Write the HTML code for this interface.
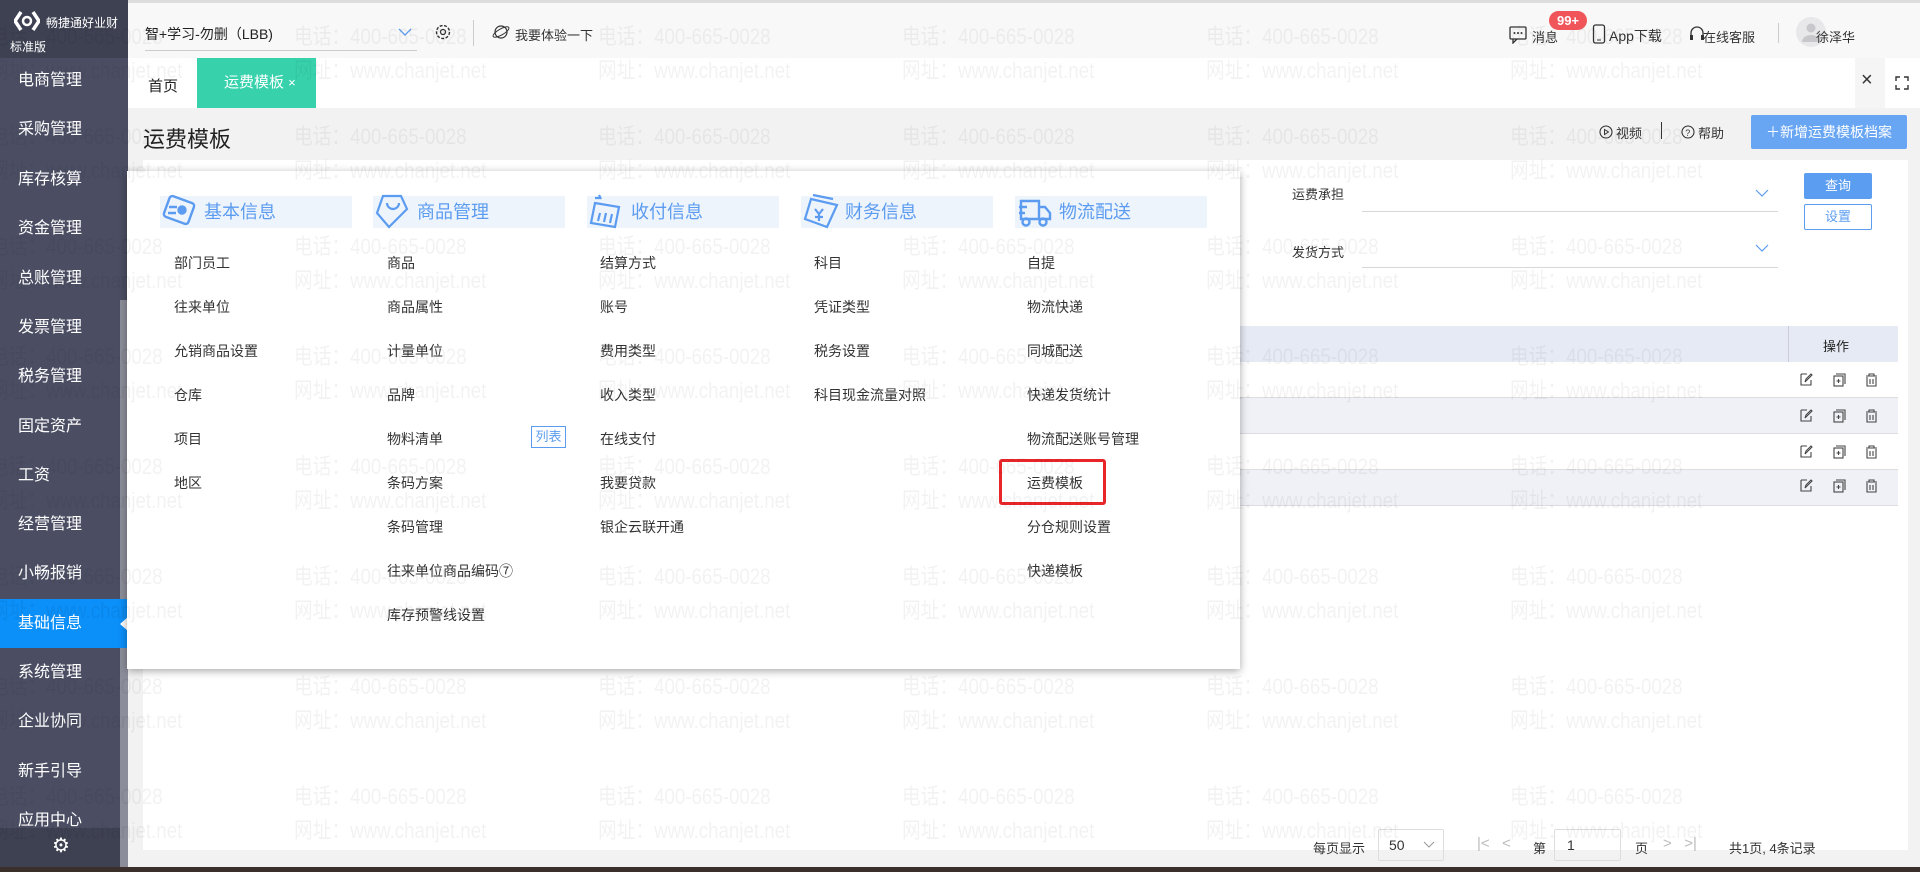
<!DOCTYPE html>
<html><head><meta charset="utf-8">
<style>
*{margin:0;padding:0;box-sizing:border-box}
body{width:1920px;height:872px;overflow:hidden;position:relative;background:#f2f2f2;font-family:"Liberation Sans","Noto Sans CJK SC",sans-serif;color:#333;font-size:14px}
.abs{position:absolute}
#side{left:0;top:0;width:128px;height:872px;background:#4b4e63}
#side .strip{left:120px;top:300px;width:8px;height:572px;background:#8b8d9a}
#logo{left:0;top:0;width:128px;height:58px;background:#3e4152;color:#fff}
.mi{left:0;width:120px;height:49px;line-height:49px;padding-left:18px;color:#fff;font-size:16px}
.mi.act{background:#0b8ff8}
#top{left:128px;top:0;width:1792px;height:58px;background:#f8f8f9;border-top:3px solid #ddd}
#tabs{left:128px;top:58px;width:1792px;height:50px;background:#fff}
#ph{left:128px;top:108px;width:1792px;height:52px;background:#f2f2f2}
#content{left:143px;top:160px;width:1765px;height:690px;background:#fff}
.wm{position:absolute;color:rgba(0,0,0,0.05);font-size:22px;white-space:nowrap;line-height:34px;transform:scaleX(0.85);transform-origin:0 0}
#pop{left:127px;top:171px;width:1113px;height:498px;background:#fff;box-shadow:0 2px 8px rgba(0,0,0,.35)}
.ch{position:absolute;top:25px;width:192px;height:32px;background:#eef4fc;color:#5c9cf0;font-size:18px;line-height:32px;padding-left:44px}
.it{position:absolute;font-size:14px;color:#333}
</style></head><body>

<div id="side" class="abs">
  <div class="strip abs"></div>
  <div id="logo" class="abs">
    <svg class="abs" style="left:14px;top:10px" width="26" height="22" viewBox="0 0 26 22"><path d="M7 2 L1 11 L7 20 M19 2 L25 11 L19 20" stroke="#fff" stroke-width="3.5" fill="none"/><circle cx="13" cy="11" r="4" fill="none" stroke="#fff" stroke-width="2.5"/></svg>
    <div class="abs" style="left:46px;top:14px;font-size:12px">畅捷通好业财</div>
    <div class="abs" style="left:10px;top:38px;font-size:12px">标准版</div>
  </div>
  <div class="mi abs" style="top:56px">电商管理</div>
  <div class="mi abs" style="top:105px">采购管理</div>
  <div class="mi abs" style="top:155px">库存核算</div>
  <div class="mi abs" style="top:204px">资金管理</div>
  <div class="mi abs" style="top:254px">总账管理</div>
  <div class="mi abs" style="top:303px">发票管理</div>
  <div class="mi abs" style="top:352px">税务管理</div>
  <div class="mi abs" style="top:402px">固定资产</div>
  <div class="mi abs" style="top:451px">工资</div>
  <div class="mi abs" style="top:500px">经营管理</div>
  <div class="mi abs" style="top:549px">小畅报销</div>
  <div class="mi abs act" style="top:599px;width:127px">基础信息</div>
  <div class="abs" style="left:120px;top:617px;width:0;height:0;border-top:7px solid transparent;border-bottom:7px solid transparent;border-right:8px solid #fff"></div>
  <div class="mi abs" style="top:648px">系统管理</div>
  <div class="mi abs" style="top:697px">企业协同</div>
  <div class="mi abs" style="top:747px">新手引导</div>
  <div class="mi abs" style="top:796px">应用中心</div>
  <div class="abs" style="left:0;top:828px;width:120px;height:40px;background:#3e4152"></div>
  <div class="abs" style="left:52px;top:833px;color:#fff;font-size:20px">⚙</div>
</div>

<div id="top" class="abs">
  <div class="abs" style="left:17px;top:21px;font-size:14px;color:#222">智+学习-勿删（LBB)</div>
  <div class="abs" style="left:17px;top:47px;width:272px;height:1px;background:#ccc"></div>
  <svg class="abs" style="left:270px;top:24px" width="14" height="10"><path d="M1 2 L7 8 L13 2" stroke="#5c9cf0" stroke-width="1.3" fill="none"/></svg>
  <svg class="abs" style="left:306px;top:20px" width="18" height="18" viewBox="0 0 18 18"><circle cx="9" cy="9" r="6.5" stroke="#333" stroke-width="1.4" fill="none" stroke-dasharray="3 1.5"/><circle cx="9" cy="9" r="2.5" stroke="#333" stroke-width="1.3" fill="none"/></svg>
  <div class="abs" style="left:345px;top:17px;width:1px;height:26px;background:#ccc"></div>
  <svg class="abs" style="left:364px;top:20px" width="18" height="18"><circle cx="9" cy="9" r="6" stroke="#333" stroke-width="1.2" fill="none"/><ellipse cx="9" cy="9" rx="9" ry="3" stroke="#333" stroke-width="1" fill="none" transform="rotate(-30 9 9)"/></svg>
  <div class="abs" style="left:387px;top:22px;font-size:13px">我要体验一下</div>
  <svg class="abs" style="left:1381px;top:23px" width="18" height="18"><rect x="1" y="1" width="16" height="12" rx="1" stroke="#333" stroke-width="1.3" fill="none"/><path d="M4 13 L4 17 L8 13" stroke="#333" stroke-width="1.3" fill="none"/><circle cx="5.5" cy="7" r="1" fill="#333"/><circle cx="9" cy="7" r="1" fill="#333"/><circle cx="12.5" cy="7" r="1" fill="#333"/></svg>
  <div class="abs" style="left:1404px;top:24px;font-size:13px">消息</div>
  <div class="abs" style="left:1421px;top:8px;width:38px;height:19px;border-radius:10px;background:#f0555a;color:#fff;font-size:13px;font-weight:bold;text-align:center;line-height:19px">99+</div>
  <svg class="abs" style="left:1464px;top:21px" width="14" height="20"><rect x="1.5" y="1" width="11" height="18" rx="2" stroke="#333" stroke-width="1.3" fill="none"/><path d="M5 16h4" stroke="#333"/></svg>
  <div class="abs" style="left:1481px;top:23px;font-size:14px">App下载</div>
  <svg class="abs" style="left:1561px;top:22px" width="16" height="18"><path d="M2 11 V8 a6 6 0 0 1 12 0 V11" stroke="#333" stroke-width="1.3" fill="none"/><rect x="1" y="10" width="3" height="5" fill="#333"/><rect x="12" y="10" width="3" height="5" fill="#333"/></svg>
  <div class="abs" style="left:1575px;top:24px;font-size:13px">在线客服</div>
  <div class="abs" style="left:1650px;top:20px;width:1px;height:20px;background:#ccc"></div>
  <div class="abs" style="left:1668px;top:14px;width:30px;height:30px;border-radius:50%;background:#e8e8ea"></div>
  <svg class="abs" style="left:1672px;top:18px" width="22" height="22"><circle cx="11" cy="7" r="4.5" fill="#c8c8cc"/><path d="M2 21 a9 7 0 0 1 18 0z" fill="#c8c8cc"/></svg>
  <div class="abs" style="left:1688px;top:24px;font-size:13px">徐泽华</div>
</div>

<div id="tabs" class="abs">
  <div class="abs" style="left:20px;top:17px;font-size:15px;color:#222">首页</div>
  <div class="abs" style="left:69px;top:0;width:119px;height:50px;background:#37d2ac;color:#fff;font-size:15px;line-height:50px;padding-left:27px">运费模板 <span style="font-size:13px">×</span></div>
  <div class="abs" style="left:1727px;top:0;width:30px;height:50px;background:#f5f5f5"></div>
  <div class="abs" style="left:1733px;top:11px;font-size:20px;color:#333">×</div>
  <svg class="abs" style="left:1767px;top:18px" width="14" height="14"><path d="M1 5V1h4M9 1h4v4M13 9v4H9M5 13H1V9" stroke="#333" stroke-width="1.4" fill="none"/></svg>
</div>

<div id="ph" class="abs">
  <div class="abs" style="left:15px;top:14px;font-size:22px;color:#222">运费模板</div>
  <svg class="abs" style="left:1471px;top:17px" width="14" height="14"><circle cx="7" cy="7" r="6" stroke="#333" stroke-width="1.1" fill="none"/><path d="M5.5 4.5 L9.5 7 L5.5 9.5z" stroke="#333" fill="none"/></svg>
  <div class="abs" style="left:1488px;top:15px;font-size:13px">视频</div>
  <div class="abs" style="left:1533px;top:14px;width:1px;height:17px;background:#333"></div>
  <svg class="abs" style="left:1553px;top:17px" width="14" height="14"><circle cx="7" cy="7" r="6" stroke="#333" stroke-width="1.1" fill="none"/><text x="4.3" y="11" font-size="9" fill="#333">?</text></svg>
  <div class="abs" style="left:1570px;top:15px;font-size:13px">帮助</div>
  <div class="abs" style="left:1623px;top:7px;width:156px;height:34px;background:#68a6f4;border-radius:2px;color:#fff;font-size:14px;line-height:34px;text-align:center">＋新增运费模板档案</div>
</div>

<div id="content" class="abs">
  <div class="abs" style="left:1149px;top:24px;font-size:13px">运费承担</div>
  <div class="abs" style="left:1219px;top:51px;width:416px;height:1px;background:#d8d8d8"></div>
  <svg class="abs" style="left:1612px;top:29px" width="14" height="9"><path d="M1 1 L7 7 L13 1" stroke="#5c9cf0" stroke-width="1.2" fill="none"/></svg>
  <div class="abs" style="left:1661px;top:13px;width:68px;height:26px;background:#5b9df1;border-radius:2px;color:#fff;font-size:13px;text-align:center;line-height:26px">查询</div>
  <div class="abs" style="left:1661px;top:44px;width:68px;height:26px;border:1px solid #5b9df1;border-radius:2px;color:#5b9df1;font-size:13px;text-align:center;line-height:24px">设置</div>
  <div class="abs" style="left:1149px;top:82px;font-size:13px">发货方式</div>
  <div class="abs" style="left:1219px;top:107px;width:416px;height:1px;background:#d8d8d8"></div>
  <svg class="abs" style="left:1612px;top:84px" width="14" height="9"><path d="M1 1 L7 7 L13 1" stroke="#5c9cf0" stroke-width="1.2" fill="none"/></svg>

  <div class="abs" style="left:10px;top:166px;width:1745px;height:36px;background:#e6eaf4"></div>
  <div class="abs" style="left:1645px;top:166px;width:1px;height:36px;background:#ccd"></div>
  <div class="abs" style="left:1680px;top:176px;font-size:13px;color:#222">操作</div>
  <div class="abs" style="left:10px;top:202px;width:1745px;height:36px;background:#fff;border-bottom:1px solid #ddd"></div>
  <div class="abs" style="left:10px;top:238px;width:1745px;height:36px;background:#eff1f7;border-bottom:1px solid #ddd"></div>
  <div class="abs" style="left:10px;top:274px;width:1745px;height:36px;background:#fff;border-bottom:1px solid #ddd"></div>
  <div class="abs" style="left:10px;top:310px;width:1745px;height:36px;background:#eff1f7;border-bottom:1px solid #ddd"></div>

  <div class="abs" style="left:1170px;top:678px;font-size:13px">每页显示</div>
  <div class="abs" style="left:1235px;top:669px;width:66px;height:32px;border:1px solid #ddd;border-radius:2px;font-size:14px;line-height:30px;padding-left:10px">50</div>
  <svg class="abs" style="left:1280px;top:681px" width="12" height="8"><path d="M1 1 L6 6 L11 1" stroke="#999" fill="none"/></svg>
  <div class="abs" style="left:1334px;top:675px;font-size:15px;color:#bbb">|&lt;&nbsp;&nbsp;&nbsp;&lt;</div>
  <div class="abs" style="left:1390px;top:678px;font-size:13px">第</div>
  <div class="abs" style="left:1411px;top:669px;width:67px;height:32px;border:1px solid #ddd;border-radius:2px;font-size:14px;line-height:30px;padding-left:12px">1</div>
  <div class="abs" style="left:1492px;top:678px;font-size:13px">页</div>
  <div class="abs" style="left:1520px;top:675px;font-size:15px;color:#bbb">&gt;&nbsp;&nbsp;&nbsp;&gt;|</div>
  <div class="abs" style="left:1586px;top:678px;font-size:13px">共1页, 4条记录</div>
</div>

<svg class="abs" style="left:1798px;top:372px" width="90" height="144">
  <g id="ic" stroke="#444" stroke-width="1.1" fill="none">
    <path d="M3 2h6M3 2v11h10V8 M7 10 L8 7 L13 2 L14 3 L9 8z"/>
    <rect x="36" y="4" width="9" height="10"/><path d="M38 2h9v10 M40.5 7v4 M38.5 9h4"/>
    <path d="M68 4h11 M71 4V2h5v2 M69 5v9h9V5 M72 7v5 M75 7v5"/>
  </g>
  <use href="#ic" y="36"/><use href="#ic" y="72"/><use href="#ic" y="106"/>
</svg>

<div id="pop" class="abs">
  <div class="ch" style="left:33px">基本信息</div>
  <div class="ch" style="left:246px">商品管理</div>
  <div class="ch" style="left:460px">收付信息</div>
  <div class="ch" style="left:674px">财务信息</div>
  <div class="ch" style="left:888px">物流配送</div>
  <svg class="abs" style="left:35px;top:22px" width="36" height="36"><g stroke="#5c9cf0" stroke-width="2.4" fill="none"><rect x="4" y="6" width="26" height="22" rx="3" transform="rotate(20 17 17)"/><circle cx="20" cy="17" r="3.5" fill="#5c9cf0"/><path d="M7 14h8 M6 20h8"/></g></svg>
  <svg class="abs" style="left:248px;top:22px" width="36" height="36"><g stroke="#5c9cf0" stroke-width="2.2" fill="none"><path d="M8 3 L2 20 L14 34 L32 16 L26 3z"/><path d="M12 10 a6 6 0 0 0 12 0"/></g></svg>
  <svg class="abs" style="left:462px;top:22px" width="36" height="36"><g stroke="#5c9cf0" stroke-width="2.2" fill="none"><path d="M6 10 L30 14 L26 34 L2 30z"/><path d="M11 20 L9 28 M17 20 L15 29 M23 21 L21 30"/><path d="M10 2 l2 4 M6 5 h6"/></g></svg>
  <svg class="abs" style="left:676px;top:22px" width="36" height="36"><g stroke="#5c9cf0" stroke-width="2.2" fill="none"><path d="M8 6 L34 12 L24 34 L2 26z"/><path d="M10 2 L30 6"/><path d="M12 16 l4 5 l4-5 M16 21v7 M12 24h8"/></g></svg>
  <svg class="abs" style="left:890px;top:22px" width="36" height="36"><g stroke="#5c9cf0" stroke-width="2.4" fill="none"><path d="M4 8h18v18H4z M22 14h6l5 6v6h-11"/><circle cx="9" cy="29" r="3.5"/><circle cx="26" cy="29" r="3.5"/><path d="M2 14h8 M2 20h6"/></g></svg>

  <div class="it" style="left:47px;top:82px">部门员工</div>
  <div class="it" style="left:47px;top:126px">往来单位</div>
  <div class="it" style="left:47px;top:170px">允销商品设置</div>
  <div class="it" style="left:47px;top:214px">仓库</div>
  <div class="it" style="left:47px;top:258px">项目</div>
  <div class="it" style="left:47px;top:302px">地区</div>

  <div class="it" style="left:260px;top:82px">商品</div>
  <div class="it" style="left:260px;top:126px">商品属性</div>
  <div class="it" style="left:260px;top:170px">计量单位</div>
  <div class="it" style="left:260px;top:214px">品牌</div>
  <div class="it" style="left:260px;top:258px">物料清单</div>
  <div class="abs" style="left:404px;top:255px;width:35px;height:22px;border:1px solid #5c9cf0;color:#5c9cf0;font-size:13px;text-align:center;line-height:20px">列表</div>
  <div class="it" style="left:260px;top:302px">条码方案</div>
  <div class="it" style="left:260px;top:346px">条码管理</div>
  <div class="it" style="left:260px;top:390px">往来单位商品编码⑦</div>
  <div class="it" style="left:260px;top:434px">库存预警线设置</div>

  <div class="it" style="left:473px;top:82px">结算方式</div>
  <div class="it" style="left:473px;top:126px">账号</div>
  <div class="it" style="left:473px;top:170px">费用类型</div>
  <div class="it" style="left:473px;top:214px">收入类型</div>
  <div class="it" style="left:473px;top:258px">在线支付</div>
  <div class="it" style="left:473px;top:302px">我要贷款</div>
  <div class="it" style="left:473px;top:346px">银企云联开通</div>

  <div class="it" style="left:687px;top:82px">科目</div>
  <div class="it" style="left:687px;top:126px">凭证类型</div>
  <div class="it" style="left:687px;top:170px">税务设置</div>
  <div class="it" style="left:687px;top:214px">科目现金流量对照</div>

  <div class="it" style="left:900px;top:82px">自提</div>
  <div class="it" style="left:900px;top:126px">物流快递</div>
  <div class="it" style="left:900px;top:170px">同城配送</div>
  <div class="it" style="left:900px;top:214px">快递发货统计</div>
  <div class="it" style="left:900px;top:258px">物流配送账号管理</div>
  <div class="it" style="left:900px;top:302px">运费模板</div>
  <div class="abs" style="left:872px;top:288px;width:107px;height:46px;border:3px solid #e8262a;border-radius:3px"></div>
  <div class="it" style="left:900px;top:346px">分仓规则设置</div>
  <div class="it" style="left:900px;top:390px">快递模板</div>
</div>

<div class="abs" style="left:0;top:867px;width:1920px;height:5px;background:#3a2f2a"></div>

<div style="position:absolute;left:0;top:0;width:1920px;height:872px;overflow:hidden;pointer-events:none">
<div class="wm" style="left:-10px;top:20px">电话：400-665-0028<br>网址：www.chanjet.net</div>
<div class="wm" style="left:294px;top:20px">电话：400-665-0028<br>网址：www.chanjet.net</div>
<div class="wm" style="left:598px;top:20px">电话：400-665-0028<br>网址：www.chanjet.net</div>
<div class="wm" style="left:902px;top:20px">电话：400-665-0028<br>网址：www.chanjet.net</div>
<div class="wm" style="left:1206px;top:20px">电话：400-665-0028<br>网址：www.chanjet.net</div>
<div class="wm" style="left:1510px;top:20px">电话：400-665-0028<br>网址：www.chanjet.net</div>
<div class="wm" style="left:-10px;top:120px">电话：400-665-0028<br>网址：www.chanjet.net</div>
<div class="wm" style="left:294px;top:120px">电话：400-665-0028<br>网址：www.chanjet.net</div>
<div class="wm" style="left:598px;top:120px">电话：400-665-0028<br>网址：www.chanjet.net</div>
<div class="wm" style="left:902px;top:120px">电话：400-665-0028<br>网址：www.chanjet.net</div>
<div class="wm" style="left:1206px;top:120px">电话：400-665-0028<br>网址：www.chanjet.net</div>
<div class="wm" style="left:1510px;top:120px">电话：400-665-0028<br>网址：www.chanjet.net</div>
<div class="wm" style="left:-10px;top:230px">电话：400-665-0028<br>网址：www.chanjet.net</div>
<div class="wm" style="left:294px;top:230px">电话：400-665-0028<br>网址：www.chanjet.net</div>
<div class="wm" style="left:598px;top:230px">电话：400-665-0028<br>网址：www.chanjet.net</div>
<div class="wm" style="left:902px;top:230px">电话：400-665-0028<br>网址：www.chanjet.net</div>
<div class="wm" style="left:1206px;top:230px">电话：400-665-0028<br>网址：www.chanjet.net</div>
<div class="wm" style="left:1510px;top:230px">电话：400-665-0028<br>网址：www.chanjet.net</div>
<div class="wm" style="left:-10px;top:340px">电话：400-665-0028<br>网址：www.chanjet.net</div>
<div class="wm" style="left:294px;top:340px">电话：400-665-0028<br>网址：www.chanjet.net</div>
<div class="wm" style="left:598px;top:340px">电话：400-665-0028<br>网址：www.chanjet.net</div>
<div class="wm" style="left:902px;top:340px">电话：400-665-0028<br>网址：www.chanjet.net</div>
<div class="wm" style="left:1206px;top:340px">电话：400-665-0028<br>网址：www.chanjet.net</div>
<div class="wm" style="left:1510px;top:340px">电话：400-665-0028<br>网址：www.chanjet.net</div>
<div class="wm" style="left:-10px;top:450px">电话：400-665-0028<br>网址：www.chanjet.net</div>
<div class="wm" style="left:294px;top:450px">电话：400-665-0028<br>网址：www.chanjet.net</div>
<div class="wm" style="left:598px;top:450px">电话：400-665-0028<br>网址：www.chanjet.net</div>
<div class="wm" style="left:902px;top:450px">电话：400-665-0028<br>网址：www.chanjet.net</div>
<div class="wm" style="left:1206px;top:450px">电话：400-665-0028<br>网址：www.chanjet.net</div>
<div class="wm" style="left:1510px;top:450px">电话：400-665-0028<br>网址：www.chanjet.net</div>
<div class="wm" style="left:-10px;top:560px">电话：400-665-0028<br>网址：www.chanjet.net</div>
<div class="wm" style="left:294px;top:560px">电话：400-665-0028<br>网址：www.chanjet.net</div>
<div class="wm" style="left:598px;top:560px">电话：400-665-0028<br>网址：www.chanjet.net</div>
<div class="wm" style="left:902px;top:560px">电话：400-665-0028<br>网址：www.chanjet.net</div>
<div class="wm" style="left:1206px;top:560px">电话：400-665-0028<br>网址：www.chanjet.net</div>
<div class="wm" style="left:1510px;top:560px">电话：400-665-0028<br>网址：www.chanjet.net</div>
<div class="wm" style="left:-10px;top:670px">电话：400-665-0028<br>网址：www.chanjet.net</div>
<div class="wm" style="left:294px;top:670px">电话：400-665-0028<br>网址：www.chanjet.net</div>
<div class="wm" style="left:598px;top:670px">电话：400-665-0028<br>网址：www.chanjet.net</div>
<div class="wm" style="left:902px;top:670px">电话：400-665-0028<br>网址：www.chanjet.net</div>
<div class="wm" style="left:1206px;top:670px">电话：400-665-0028<br>网址：www.chanjet.net</div>
<div class="wm" style="left:1510px;top:670px">电话：400-665-0028<br>网址：www.chanjet.net</div>
<div class="wm" style="left:-10px;top:780px">电话：400-665-0028<br>网址：www.chanjet.net</div>
<div class="wm" style="left:294px;top:780px">电话：400-665-0028<br>网址：www.chanjet.net</div>
<div class="wm" style="left:598px;top:780px">电话：400-665-0028<br>网址：www.chanjet.net</div>
<div class="wm" style="left:902px;top:780px">电话：400-665-0028<br>网址：www.chanjet.net</div>
<div class="wm" style="left:1206px;top:780px">电话：400-665-0028<br>网址：www.chanjet.net</div>
<div class="wm" style="left:1510px;top:780px">电话：400-665-0028<br>网址：www.chanjet.net</div>
</div>
</body></html>
